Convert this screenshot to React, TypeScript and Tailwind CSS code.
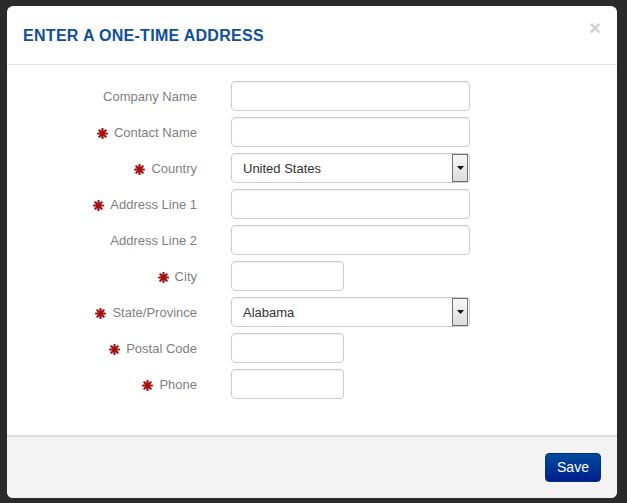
import React from "react";

const Star = () => (
  <svg width="11" height="11" viewBox="0 0 11 11" className="shrink-0">
    <g stroke="#a80f0f" strokeWidth="2.2" strokeLinecap="round">
      <line x1="5.5" y1="1" x2="5.5" y2="10" />
      <line x1="1" y1="5.5" x2="10" y2="5.5" />
      <line x1="2.3" y1="2.3" x2="8.7" y2="8.7" />
      <line x1="8.7" y1="2.3" x2="2.3" y2="8.7" />
    </g>
    <circle cx="5.5" cy="5.5" r="2.4" fill="#a80f0f" />
  </svg>
);

type Row = { label: string; req: boolean; kind: "text" | "short" | "select"; value?: string };

const rows: Row[] = [
  { label: "Company Name", req: false, kind: "text" },
  { label: "Contact Name", req: true, kind: "text" },
  { label: "Country", req: true, kind: "select", value: "United States" },
  { label: "Address Line 1", req: true, kind: "text" },
  { label: "Address Line 2", req: false, kind: "text" },
  { label: "City", req: true, kind: "short" },
  { label: "State/Province", req: true, kind: "select", value: "Alabama" },
  { label: "Postal Code", req: true, kind: "short" },
  { label: "Phone", req: true, kind: "short" },
];

function Field({ row }: { row: Row }) {
  if (row.kind === "select") {
    return (
      <div className="w-[239px] h-[30px] border border-[#cccccc] rounded-[4px] bg-white flex items-center justify-between pl-[11px] pr-[1px] shadow-[inset_0_1px_1px_rgba(0,0,0,0.06)]">
        <span className="text-[13px] text-[#333333] pt-[1px]">{row.value}</span>
        <div className="w-[16px] h-[28px] border border-[#6f6f6f] bg-gradient-to-b from-[#f8f8f8] to-[#dcdcdc] flex items-center justify-center">
          <svg width="7" height="4" viewBox="0 0 7 4">
            <polygon points="0,0 7,0 3.5,4" fill="#111" />
          </svg>
        </div>
      </div>
    );
  }
  return (
    <div
      className={`${row.kind === "short" ? "w-[113px]" : "w-[239px]"} h-[30px] border border-[#cccccc] rounded-[4px] bg-white shadow-[inset_0_1px_1px_rgba(0,0,0,0.06)]`}
    />
  );
}

export default function App() {
  return (
    <div
      className="w-[627px] h-[503px] bg-[#2b2b2b] pt-[6px] pl-[7px] overflow-hidden"
      style={{ fontFamily: '"Liberation Sans", Arial, sans-serif' }}
    >
      <div className="w-[610px] h-[492px] bg-white rounded-[6px] flex flex-col overflow-hidden">
        <div className="h-[59px] border-b border-[#e5e5e5] flex items-start justify-between pl-[16px] pr-[16px]">
          <h1 className="mt-[21px] text-[16px] leading-[18px] font-bold text-[#0c4f9d] tracking-[0.3px]">
            ENTER A ONE-TIME ADDRESS
          </h1>
          <span className="mt-[12px] text-[20px] font-bold text-[#cfcfcf] leading-[20px]">×</span>
        </div>
        <div className="flex-1 pt-[16px]">
          <div className="grid grid-cols-[190px_auto] gap-x-[34px] gap-y-[6px] items-center">
            {rows.map((r) => (
              <React.Fragment key={r.label}>
                <div className="flex items-center justify-end gap-[6px] text-[13px] text-[#7f7f7f] pt-[2px]">
                  {r.req && <Star />}
                  <span>{r.label}</span>
                </div>
                <Field row={r} />
              </React.Fragment>
            ))}
          </div>
        </div>
        <div className="h-[63px] border-t-2 border-[#dddddd] bg-[#f3f3f3] flex items-center justify-end pr-[16px]">
          <button className="w-[56px] h-[29px] rounded-[4px] bg-gradient-to-b from-[#004a9c] to-[#001d8c] text-white text-[14px] border border-[#00307f]">
            Save
          </button>
        </div>
      </div>
    </div>
  );
}
